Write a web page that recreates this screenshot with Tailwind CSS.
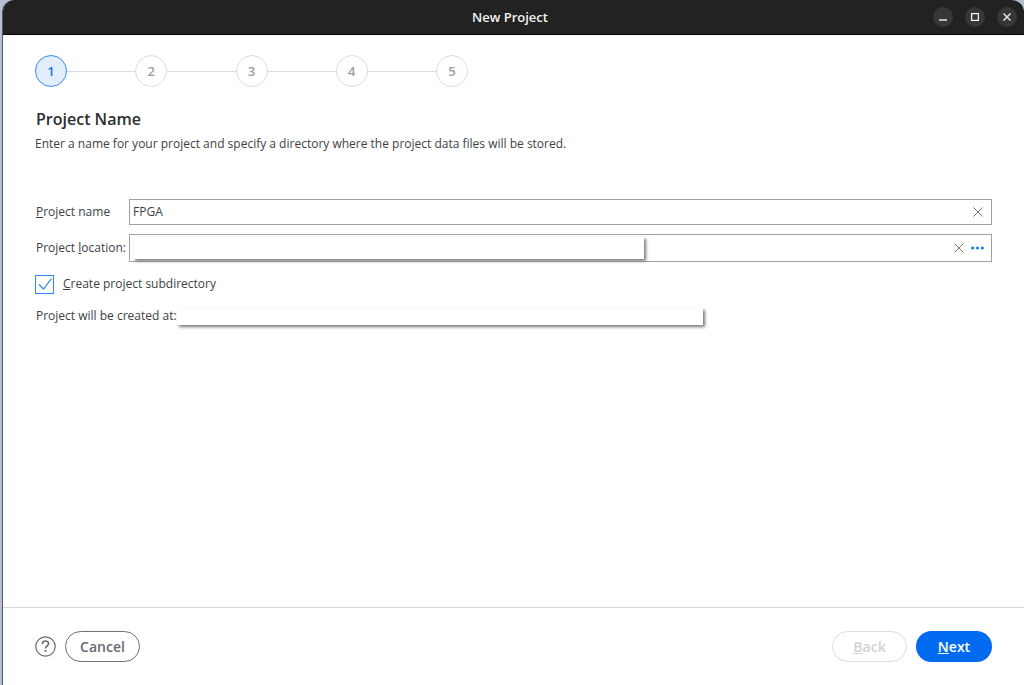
<!DOCTYPE html>
<html lang="en">
<head>
  <meta charset="UTF-8">
  <meta name="viewport" content="width=device-width, initial-scale=1.0">
  <title>New Project</title>
  <script src="https://cdn.jsdelivr.net/npm/@tailwindcss/browser@4"></script>
</head>
<body class="bg-[#b4bfd0] font-['Open_Sans',sans-serif] text-[13px] leading-5 text-[#3c3f43] h-screen pl-[2px]">

  <!-- Window -->
  <div class="h-full flex flex-col bg-white border-l border-[#55585e] rounded-t-xl overflow-hidden">

    <!-- Title bar -->
    <header class="h-[35px] shrink-0 grid grid-cols-[1fr_auto_1fr] items-center bg-[#222222] border-b border-b-black pr-[7px]">
      <h1 class="col-start-2 font-semibold text-[13px] text-[#f2f2f2]">New Project</h1>
      <div class="flex justify-end gap-3">
        <button type="button" aria-label="Minimize" class="size-5 rounded-full bg-[#373737] text-[#b8b8b8]">
          <svg viewBox="0 0 20 20" class="size-5" fill="none" stroke="currentColor" stroke-width="2"><path d="M6 13h8"/></svg>
        </button>
        <button type="button" aria-label="Maximize" class="size-5 rounded-full bg-[#373737] text-[#f0f0f0]">
          <svg viewBox="0 0 20 20" class="size-5" fill="none" stroke="currentColor" stroke-width="1.3"><rect x="6.6" y="6.6" width="6.8" height="6.8"/></svg>
        </button>
        <button type="button" aria-label="Close" class="size-5 rounded-full bg-[#373737] text-[#e0e0e0]">
          <svg viewBox="0 0 20 20" class="size-5" fill="none" stroke="currentColor" stroke-width="1.6"><path d="M6.5 6.5l7 7M13.5 6.5l-7 7"/></svg>
        </button>
      </div>
    </header>

    <main class="grow px-8 pt-5">
      <!-- Wizard steps -->
      <ol class="flex items-center w-full max-w-[433px] font-semibold text-[#9b9da0]">
        <li class="size-8 shrink-0 rounded-full border border-[#3b8cf5] bg-[#e2eefe] text-[#1a73e8] flex items-center justify-center" aria-current="step">1</li>
        <li class="grow h-px bg-[#d9dee3]" aria-hidden="true"></li>
        <li class="size-8 shrink-0 rounded-full border border-[#d9dee3] flex items-center justify-center">2</li>
        <li class="grow h-px bg-[#d9dee3]" aria-hidden="true"></li>
        <li class="size-8 shrink-0 rounded-full border border-[#d9dee3] flex items-center justify-center">3</li>
        <li class="grow h-px bg-[#d9dee3]" aria-hidden="true"></li>
        <li class="size-8 shrink-0 rounded-full border border-[#d9dee3] flex items-center justify-center">4</li>
        <li class="grow h-px bg-[#d9dee3]" aria-hidden="true"></li>
        <li class="size-8 shrink-0 rounded-full border border-[#d9dee3] flex items-center justify-center">5</li>
      </ol>

      <h2 class="mt-5 pl-px text-base leading-6 font-semibold text-[#2c2e31]">Project Name</h2>
      <p class="mt-[3px] text-xs leading-5">Enter a name for your project and specify a directory where the project data files will be stored.</p>

      <!-- Project form -->
      <form id="projectForm" class="mt-[45px] flex flex-col text-xs leading-5">
        <div class="grid grid-cols-[94px_1fr] gap-y-[9px] items-center">
          <label for="projectName" class="pl-px whitespace-nowrap"><u>P</u>roject name</label>
          <div class="h-[26px] flex items-center border border-[#a0a0a0] pl-[3px] pr-2">
            <input type="text" id="projectName" name="projectName" value="FPGA" class="grow min-w-0 outline-none">
            <button type="button" aria-label="Clear project name" class="text-[#777777]">
              <svg viewBox="0 0 10 10" class="size-[10px]" fill="none" stroke="currentColor"><path d="M.5 .5l9 9M9.500 .5l-9 9"/></svg>
            </button>
          </div>

          <label for="projectLocation" class="pl-px whitespace-nowrap">Project <u>l</u>ocation:</label>
          <div class="h-7 flex items-center border border-[#a0a0a0] pl-[3px] pr-[7px]">
            <input type="text" id="projectLocation" name="projectLocation" class="w-[60%] h-[22px] bg-white outline-none shadow-[2px_2px_3px_#777777]">
            <button type="button" aria-label="Clear project location" class="ml-auto text-[#777777]">
              <svg viewBox="0 0 10 10" class="size-[10px]" fill="none" stroke="currentColor"><path d="M.5 .5l9 9M9.500 .5l-9 9"/></svg>
            </button>
            <button type="button" aria-label="Browse" class="ml-[7px] text-[#0d72f5]">
              <svg viewBox="0 0 13 4" class="w-[13px] h-1" fill="currentColor"><circle cx="1.700" cy="2" r="1.500"/><circle cx="6.500" cy="2" r="1.500"/><circle cx="11.300" cy="2" r="1.500"/></svg>
            </button>
          </div>
        </div>

        <label class="mt-3 flex items-center gap-[9px]">
          <span class="grid size-[19px]">
            <input type="checkbox" name="createSubdir" checked class="peer appearance-none col-start-1 row-start-1 size-[19px] border border-[#2f86f6] bg-white">
            <svg viewBox="0 0 19 19" class="col-start-1 row-start-1 size-[19px] pointer-events-none invisible peer-checked:visible" fill="none" stroke="#2f86f6" stroke-width="1.200"><path d="M4 9.500l4.500 4.500L16.500 3.500"/></svg>
          </span>
          <span><u>C</u>reate project subdirectory</span>
        </label>

        <div class="mt-3 flex items-center">
          <label for="createdAt" class="shrink-0 pl-px">Project will be created at:</label>
          <output id="createdAt" class="w-[55%] h-[17px] bg-white shadow-[2px_2px_3px_#777777]"></output>
        </div>
      </form>
    </main>

    <!-- Wizard buttons -->
    <footer class="shrink-0 flex items-center px-8 pt-[23px] pb-[23px] border-t border-[#d2d8de] text-sm font-semibold">
      <button type="button" aria-label="Help" class="text-[#666a6e]">
        <svg viewBox="0 0 21 21" class="size-[21px]" fill="none" stroke="currentColor" stroke-width="1.200"><circle cx="10.500" cy="10.500" r="9.700"/><path d="M7.400 8c0-4 6.200-3.700 6.200-.4 0 2.300-3 2.200-3 4.900" stroke-width="1.600"/><path d="M10.600 14v1.900" stroke-width="1.800"/></svg>
      </button>
      <button type="button" class="ml-[9px] w-[75px] h-[31px] rounded-full border border-[#6b7280] text-[#666b73]">Cancel</button>
      <button type="button" disabled class="ml-auto w-[75px] h-[31px] rounded-full border border-[#d9dee3] text-[#cfd4d9]"><u>B</u>ack</button>
      <button type="submit" form="projectForm" class="ml-[9px] w-[76px] h-[31px] rounded-full bg-[#006bf1] text-white"><u>N</u>ext</button>
    </footer>
  </div>

</body>
</html>
